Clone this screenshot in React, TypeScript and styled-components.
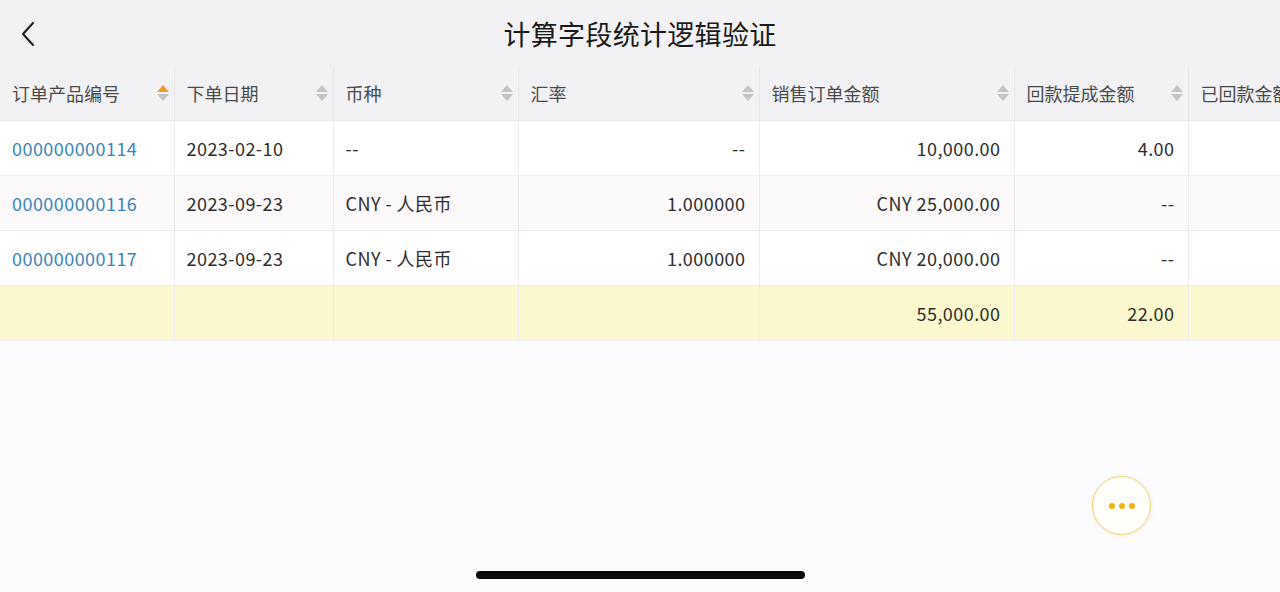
import styled, { createGlobalStyle } from "styled-components";

const GlobalStyle = createGlobalStyle`
  html, body {
    margin: 0;
    padding: 0;
    background: #fcfbfd;
  }
  body {
    font-family: "Noto Sans CJK SC", "Noto Sans", sans-serif;
    color: #333;
  }
`;

const Page = styled.div`
  width: 1280px;
  height: 592px;
  display: flex;
  flex-direction: column;
  overflow: hidden;
  position: relative;
  background: #fcfbfd;
`;

const NavBar = styled.header`
  height: 67px;
  flex-shrink: 0;
  display: grid;
  grid-template-columns: 80px 1fr 80px;
  align-items: center;
  background: #f2f2f4;
`;

const BackButton = styled.button`
  border: none;
  background: none;
  padding: 0 0 0 18px;
  display: flex;
  align-items: center;
  color: #222;
  cursor: pointer;
`;

const Title = styled.h1`
  margin: 0;
  text-align: center;
  font-size: 27px;
  font-weight: 400;
  color: #1a1a1a;
  letter-spacing: 0.3px;
`;

const TableWrap = styled.div`
  overflow: hidden;
  width: 1280px;
`;

const Table = styled.table`
  border-collapse: collapse;
  table-layout: fixed;
  width: 1338px;
  font-size: 18px;
`;

const HeadCell = styled.th`
  height: 53px;
  box-sizing: border-box;
  padding: 0 4px 0 12px;
  background: #f2f2f4;
  font-weight: 400;
  color: #4a4a4a;
  text-align: left;
  border-right: 1px solid #e6e6ea;
  border-bottom: 1px solid #e9e9ec;
  white-space: nowrap;
  overflow: hidden;
`;

const HeadInner = styled.div`
  display: flex;
  align-items: center;
  justify-content: space-between;
  gap: 6px;
`;

const Row = styled.tr<{ $tone: "plain" | "alt" | "total" }>`
  background: ${(p) =>
    p.$tone === "total" ? "#fbf8cf" : p.$tone === "alt" ? "#fcf9fb" : "#ffffff"};
`;

const Cell = styled.td<{ $align?: "left" | "right"; $link?: boolean }>`
  height: 55px;
  box-sizing: border-box;
  padding: 0 13px 0 12px;
  text-align: ${(p) => p.$align ?? "left"};
  color: ${(p) => (p.$link ? "#3b86b4" : "#2e2e2e")};
  letter-spacing: 0.45px;
  border-right: 1px solid #eceaee;
  border-bottom: 1px solid #efedf0;
  white-space: nowrap;
  overflow: hidden;
`;

const Fab = styled.button`
  position: absolute;
  left: 1092px;
  top: 476px;
  width: 59px;
  height: 59px;
  border-radius: 50%;
  border: 1.5px solid #ecd266;
  background: #fffefb;
  display: flex;
  align-items: center;
  justify-content: center;
  gap: 4px;
  padding: 0;
  box-shadow: 0 1px 4px rgba(220, 190, 80, 0.15);
`;

const Dot = styled.span`
  width: 6px;
  height: 6px;
  border-radius: 50%;
  background: #efb312;
`;

const HomeBar = styled.div`
  position: absolute;
  left: 476px;
  top: 571px;
  width: 329px;
  height: 8px;
  border-radius: 4px;
  background: #0a0a0a;
`;

function SortIcon({ active }: { active?: boolean }) {
  return (
    <svg width="14" height="20" viewBox="0 0 14 20">
      <path d="M7 2 L13 9 H1 Z" fill={active ? "#ee9a2c" : "#c4c4c8"} />
      <path d="M7 18 L13 11 H1 Z" fill="#c4c4c8" />
    </svg>
  );
}

const columns = [
  { title: "订单产品编号", width: 174, active: true },
  { title: "下单日期", width: 159 },
  { title: "币种", width: 185 },
  { title: "汇率", width: 241 },
  { title: "销售订单金额", width: 255 },
  { title: "回款提成金额", width: 174 },
  { title: "已回款金额", width: 150 },
];

const rows = [
  { id: "000000000114", date: "2023-02-10", cur: "--", rate: "--", amount: "10,000.00", comm: "4.00" },
  { id: "000000000116", date: "2023-09-23", cur: "CNY - 人民币", rate: "1.000000", amount: "CNY 25,000.00", comm: "--" },
  { id: "000000000117", date: "2023-09-23", cur: "CNY - 人民币", rate: "1.000000", amount: "CNY 20,000.00", comm: "--" },
];

export default function App() {
  return (
    <Page>
      <GlobalStyle />
      <NavBar>
        <BackButton aria-label="返回">
          <svg width="24" height="30" viewBox="0 0 24 30" fill="none">
            <path d="M15 4 L5 15 L15 26" stroke="#1c1c1c" strokeWidth="2" strokeLinecap="round" strokeLinejoin="round" />
          </svg>
        </BackButton>
        <Title>计算字段统计逻辑验证</Title>
        <span />
      </NavBar>
      <TableWrap>
        <Table>
          <colgroup>
            {columns.map((c) => (
              <col key={c.title} style={{ width: c.width }} />
            ))}
          </colgroup>
          <thead>
            <tr>
              {columns.map((c) => (
                <HeadCell key={c.title}>
                  <HeadInner>
                    <span>{c.title}</span>
                    <SortIcon active={c.active} />
                  </HeadInner>
                </HeadCell>
              ))}
            </tr>
          </thead>
          <tbody>
            {rows.map((r, i) => (
              <Row key={r.id} $tone={i % 2 === 1 ? "alt" : "plain"}>
                <Cell $link>{r.id}</Cell>
                <Cell>{r.date}</Cell>
                <Cell>{r.cur}</Cell>
                <Cell $align="right">{r.rate}</Cell>
                <Cell $align="right">{r.amount}</Cell>
                <Cell $align="right">{r.comm}</Cell>
                <Cell />
              </Row>
            ))}
            <Row $tone="total">
              <Cell />
              <Cell />
              <Cell />
              <Cell />
              <Cell $align="right">55,000.00</Cell>
              <Cell $align="right">22.00</Cell>
              <Cell />
            </Row>
          </tbody>
        </Table>
      </TableWrap>
      <Fab aria-label="更多">
        <Dot />
        <Dot />
        <Dot />
      </Fab>
      <HomeBar />
    </Page>
  );
}
